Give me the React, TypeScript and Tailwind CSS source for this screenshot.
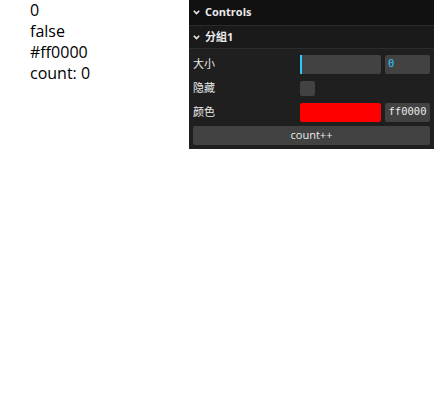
const ui = '"Segoe UI", "Open Sans", "Noto Sans CJK SC", sans-serif';
const mono = '"DejaVu Sans Mono", "Liberation Mono", monospace';

function Chevron() {
  return (
    <svg width="7" height="5" viewBox="0 0 7 5" className="mr-[5px] shrink-0">
      <path d="M0.8 0.8 L3.5 3.6 L6.2 0.8" fill="none" stroke="#ebebeb" strokeWidth="1.6" />
    </svg>
  );
}

function Row({ label, children }: { label: string; children: React.ReactNode }) {
  return (
    <div className="flex h-[20px] items-center">
      <div className="w-[111px] pl-[4px] text-[11px] text-[#ebebeb]">{label}</div>
      <div className="flex flex-1 items-center gap-[4px] pr-[4px]">{children}</div>
    </div>
  );
}

export default function App() {
  return (
    <div className="flex justify-between bg-white">
      <div className="pl-[30px] text-[16px] leading-[21px] text-black" style={{ fontFamily: ui }}>
        <div>0</div>
        <div>false</div>
        <div>#ff0000</div>
        <div>count: 0</div>
      </div>

      <div className="w-[245px] bg-[#1f1f1f] pb-[4px] text-[#ebebeb]" style={{ fontFamily: ui }}>
        <div className="flex h-[25px] items-center bg-[#111111] pl-[4px] text-[11px] font-bold">
          <Chevron />
          Controls
        </div>
        <div className="flex h-[24px] items-center border-y border-[#2c2c2c] bg-[#1a1a1a] pl-[4px] text-[11px] font-bold">
          <Chevron />
          分組1
        </div>
        <div className="flex flex-col gap-[4px] pt-[5px]">
          <Row label="大小">
            <div className="flex h-[19px] w-[81px] rounded-[2px] bg-[#424242]">
              <div className="h-full w-[2px] bg-[#2cc9ff]" />
            </div>
            <div
              className="flex h-[19px] flex-1 items-center rounded-[2px] bg-[#424242] pl-[3px] text-[10.5px] text-[#2cc9ff]"
              style={{ fontFamily: mono }}
            >
              0
            </div>
          </Row>
          <Row label="隐藏">
            <div className="h-[15px] w-[15px] rounded-[2px] bg-[#424242]" />
          </Row>
          <Row label="颜色">
            <div className="h-[19px] w-[81px] rounded-[2px] bg-[#ff0000]" />
            <div
              className="flex h-[19px] flex-1 items-center justify-center rounded-[2px] bg-[#424242] text-[10.5px] text-[#ebebeb]"
              style={{ fontFamily: mono }}
            >
              ff0000
            </div>
          </Row>
          <div className="px-[4px]">
            <div className="flex h-[19px] items-center justify-center rounded-[2px] bg-[#424242] text-[11px] text-[#ebebeb]">
              count++
            </div>
          </div>
        </div>
      </div>
    </div>
  );
}
